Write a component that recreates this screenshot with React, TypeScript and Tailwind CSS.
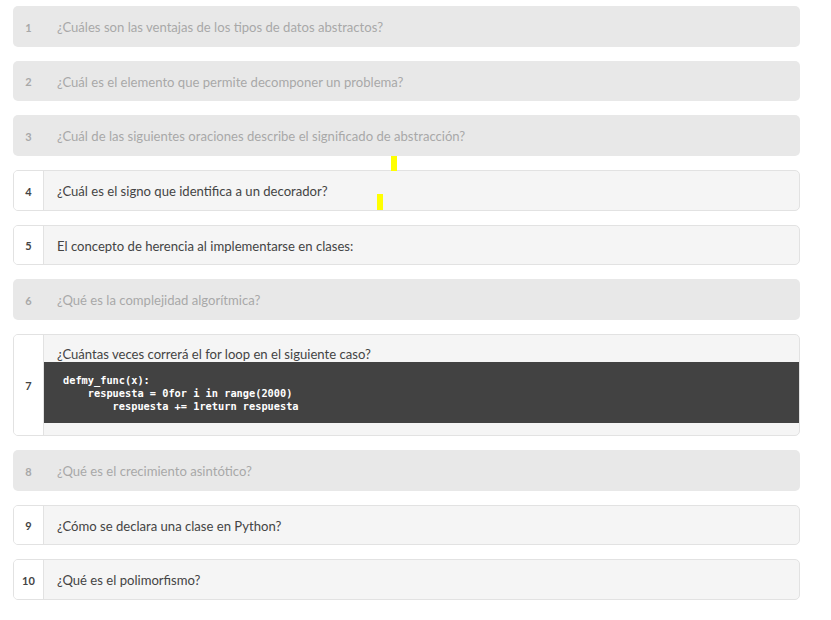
import React from "react";

type Q = { n: number; text: string; active: boolean; code?: string };

const qs: Q[] = [
  { n: 1, text: "¿Cuáles son las ventajas de los tipos de datos abstractos?", active: false },
  { n: 2, text: "¿Cuál es el elemento que permite decomponer un problema?", active: false },
  { n: 3, text: "¿Cuál de las siguientes oraciones describe el significado de abstracción?", active: false },
  { n: 4, text: "¿Cuál es el signo que identifica a un decorador?", active: true },
  { n: 5, text: "El concepto de herencia al implementarse en clases:", active: true },
  { n: 6, text: "¿Qué es la complejidad algorítmica?", active: false },
  {
    n: 7,
    text: "¿Cuántas veces correrá el for loop en el siguiente caso?",
    active: true,
    code: "defmy_func(x):\n    respuesta = 0for i in range(2000)\n        respuesta += 1return respuesta",
  },
  { n: 8, text: "¿Qué es el crecimiento asintótico?", active: false },
  { n: 9, text: "¿Cómo se declara una clase en Python?", active: true },
  { n: 10, text: "¿Qué es el polimorfismo?", active: true },
];

function Card({ q }: { q: Q }) {
  if (!q.active) {
    return (
      <div className="flex h-[40.67px] items-center rounded-[5px] bg-[#e8e8e8] pt-[3px]">
        <div className="w-[31px] text-center text-[11px] font-bold text-[#a8a8a8]">{q.n}</div>
        <div className="pl-[13px] text-[13.1px] text-[#a8a8a8]">{q.text}</div>
      </div>
    );
  }
  if (q.code) {
    return (
      <div className="flex h-[102px] rounded-[5px] border border-[#e2e2e2] bg-[#f5f5f5] overflow-hidden">
        <div className="flex w-[30px] shrink-0 items-center justify-center border-r border-[#e2e2e2] bg-white pt-[3px] text-[11px] font-bold text-[#444]">
          {q.n}
        </div>
        <div className="flex-1 pt-[12px]">
          <div className="pl-[13px] text-[13.1px] leading-[15px] text-[#444]">{q.text}</div>
          <pre
            className="h-[61px] bg-[#424242] pl-[19px] pt-[12px] text-[10.3px] leading-[13px] font-bold text-white"
            style={{ fontFamily: '"DejaVu Sans Mono", monospace' }}
          >
            {q.code}
          </pre>
        </div>
      </div>
    );
  }
  return (
    <div className="flex h-[40.67px] rounded-[5px] border border-[#e2e2e2] bg-[#f5f5f5] overflow-hidden">
      <div className="flex w-[30px] shrink-0 items-center justify-center border-r border-[#e2e2e2] bg-white pt-[3px] text-[11px] font-bold text-[#444]">
        {q.n}
      </div>
      <div className="flex items-center pl-[13px] pt-[3px] text-[13.1px] text-[#444]">{q.text}</div>
    </div>
  );
}

export default function App() {
  return (
    <div className="relative min-h-[620px] bg-white" style={{ fontFamily: 'Lato, "Open Sans", sans-serif' }}>
      <div className="ml-[13px] flex w-[787px] flex-col gap-[14px] pt-[6px]">
        {qs.map((q) => (
          <Card key={q.n} q={q} />
        ))}
      </div>
      <div className="absolute left-[391px] top-[156px] h-[15px] w-[6px] bg-[#ffff00]" />
      <div className="absolute left-[377px] top-[194px] h-[16px] w-[6px] bg-[#ffff00]" />
    </div>
  );
}
